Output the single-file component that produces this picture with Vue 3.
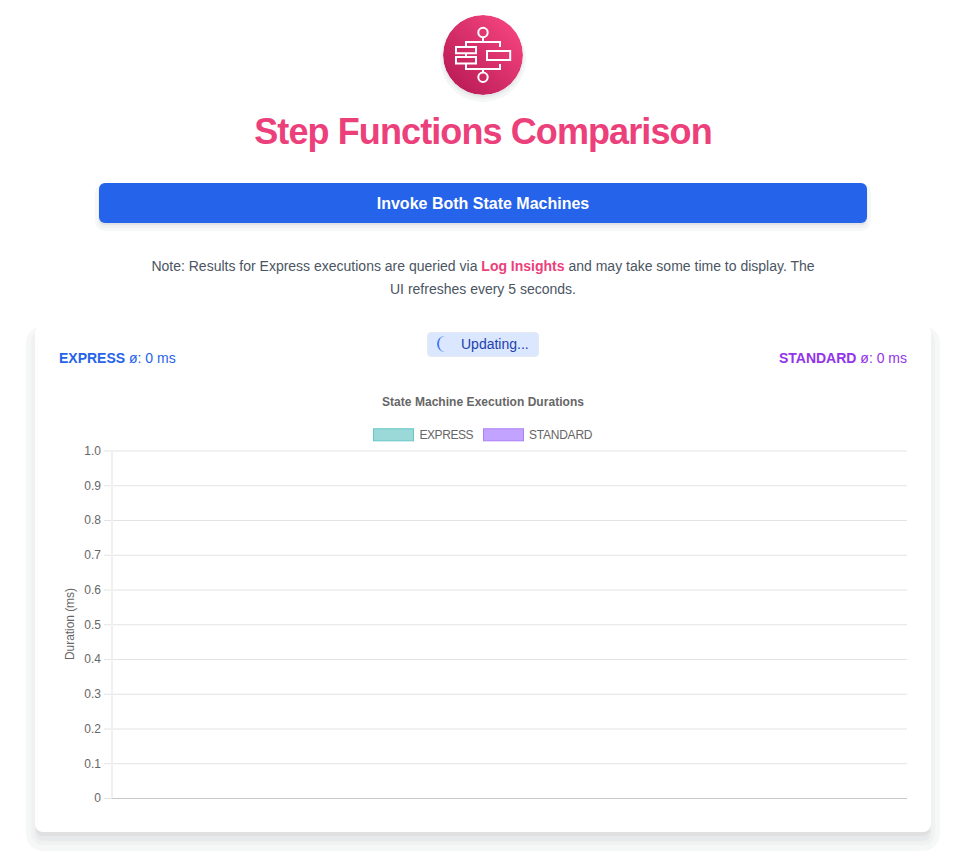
<script setup>
const ticks = ['1.0', '0.9', '0.8', '0.7', '0.6', '0.5', '0.4', '0.3', '0.2', '0.1', '0'].map((label, i) => ({
  label,
  y: 68 + i * 34.75,
}))
</script>

<template>
  <main class="page">
    <svg class="logo" viewBox="0 0 80 80" width="80" height="80">
      <defs>
        <linearGradient id="pink" x1="0" y1="1" x2="1" y2="0">
          <stop offset="0.1" stop-color="#b91b55" />
          <stop offset="0.9" stop-color="#f5447f" />
        </linearGradient>
      </defs>
      <circle cx="40" cy="40" r="40" fill="url(#pink)" />
      <g fill="none" stroke="#fff" stroke-width="2">
        <circle cx="40" cy="17.5" r="4.7" />
        <circle cx="40" cy="62.3" r="4.7" />
        <path d="M40 22v5M23 32v-5h34v5M23 39v3M23 49v5h34v-5M40 54v4" />
        <path d="M13 31.9h20v6.3H13zM13 42h20v6.4H13zM44 35.9h23.2v9H44z" />
      </g>
    </svg>
    <h1 class="title">Step Functions Comparison</h1>
    <button class="invoke">Invoke Both State Machines</button>
    <p class="note">
      Note: Results for Express executions are queried via <b>Log Insights</b> and may take some time to display. The<br />UI refreshes every 5 seconds.
    </p>
    <section class="card">
      <div class="status"><i class="spinner"></i><span>Updating...</span></div>
      <div class="averages">
        <div class="express"><b>EXPRESS</b> ø: 0 ms</div>
        <div class="standard"><b>STANDARD</b> ø: 0 ms</div>
      </div>
      <svg class="chart" width="848" height="424" viewBox="0 0 848 424">
        <text class="chart-title" x="424" y="22.5" text-anchor="middle" textLength="202">State Machine Execution Durations</text>
        <rect x="314.5" y="45.8" width="40" height="12" fill="#9bd9d9" stroke="#67c7c7" />
        <text x="360.5" y="55.5" textLength="54">EXPRESS</text>
        <rect x="424.5" y="45.8" width="40" height="12" fill="#c2a3ff" stroke="#aa7ff7" />
        <text x="470" y="55.5" textLength="63.5">STANDARD</text>
        <g v-for="(tick, i) in ticks" :key="tick.label">
          <text x="42" :y="tick.y + 3.8" text-anchor="end">{{ tick.label }}</text>
          <path :d="`M45 ${tick.y}H848`" stroke="#e3e3e3" />
          <path v-if="i === 10" :d="`M53 ${tick.y}H848`" stroke="#c8c8c8" />
        </g>
        <path d="M53 68V415" stroke="#f0f0f0" stroke-width="2" />
        <text x="0" y="0" transform="translate(15 241) rotate(-90)" text-anchor="middle" textLength="72">Duration (ms)</text>
      </svg>
    </section>
  </main>
</template>

<style>
body {
  background: #fff;
}
</style>

<style scoped>
.page {
  box-sizing: border-box;
  width: 966px;
  height: 862px;
  padding-top: 15px;
  display: flex;
  flex-direction: column;
  align-items: center;
  font-family: "Liberation Sans", Arial, sans-serif;
  overflow: hidden;
}
.logo {
  flex: none;
  border-radius: 50%;
  box-shadow: 0 2px 1px #e4e5e6, 0 3px 0 1px #eff0f1, 0 4px 0 3px #f5f6f6;
}
.title {
  margin: 17px 0 31px;
  font-size: 36px;
  line-height: 40px;
  letter-spacing: -0.9px;
  color: #ec407a;
  white-space: nowrap;
}
.invoke {
  width: 768px;
  height: 40px;
  flex: none;
  padding: 1px 0 0;
  border: 0;
  border-radius: 6px;
  background: #2563eb;
  color: #fff;
  font: bold 16px/39px "Liberation Sans", Arial, sans-serif;
  box-shadow: 0 2px 1px #e0e1e3, 0 4px 0 1px #eff0f1, 0 4px 0 4px #f6f7f7;
}
.note {
  margin: 32px 0 24px;
  text-align: center;
  font-size: 14px;
  line-height: 22.75px;
  color: #4b5563;
  white-space: nowrap;
}
.note b {
  color: #ec407a;
}
.card {
  position: relative;
  box-sizing: border-box;
  width: 896px;
  height: 507px;
  padding: 23px 24px 24px;
  border-radius: 8px;
  background: #fff;
  box-shadow: 0 5px 1px -1px #e0e0e1, 0 9px 1px 0 #e8e9eb, 0 9px 1px 4px #f0f2f2, 0 10px 0 9px #f6f8f7;
}
.status {
  position: absolute;
  top: 7px;
  left: 392px;
  box-sizing: border-box;
  width: 112px;
  height: 25px;
  padding-left: 9px;
  display: flex;
  align-items: center;
  gap: 8px;
  border: 1px solid #e5e9f0;
  border-radius: 4px;
  background: #dbe7fe;
  color: #1e40af;
  font-size: 14px;
}
.spinner {
  box-sizing: border-box;
  width: 16px;
  height: 16px;
  border-left: 2px solid #4b7df0;
  border-radius: 50%;
}
.averages {
  display: flex;
  justify-content: space-between;
  font-size: 14px;
  line-height: 20px;
}
.express {
  color: #2563eb;
}
.standard {
  color: #9333ea;
}
.chart {
  display: block;
  margin-top: 15px;
  fill: #666;
  font-size: 12px;
}
.chart-title {
  font-weight: bold;
}
</style>
